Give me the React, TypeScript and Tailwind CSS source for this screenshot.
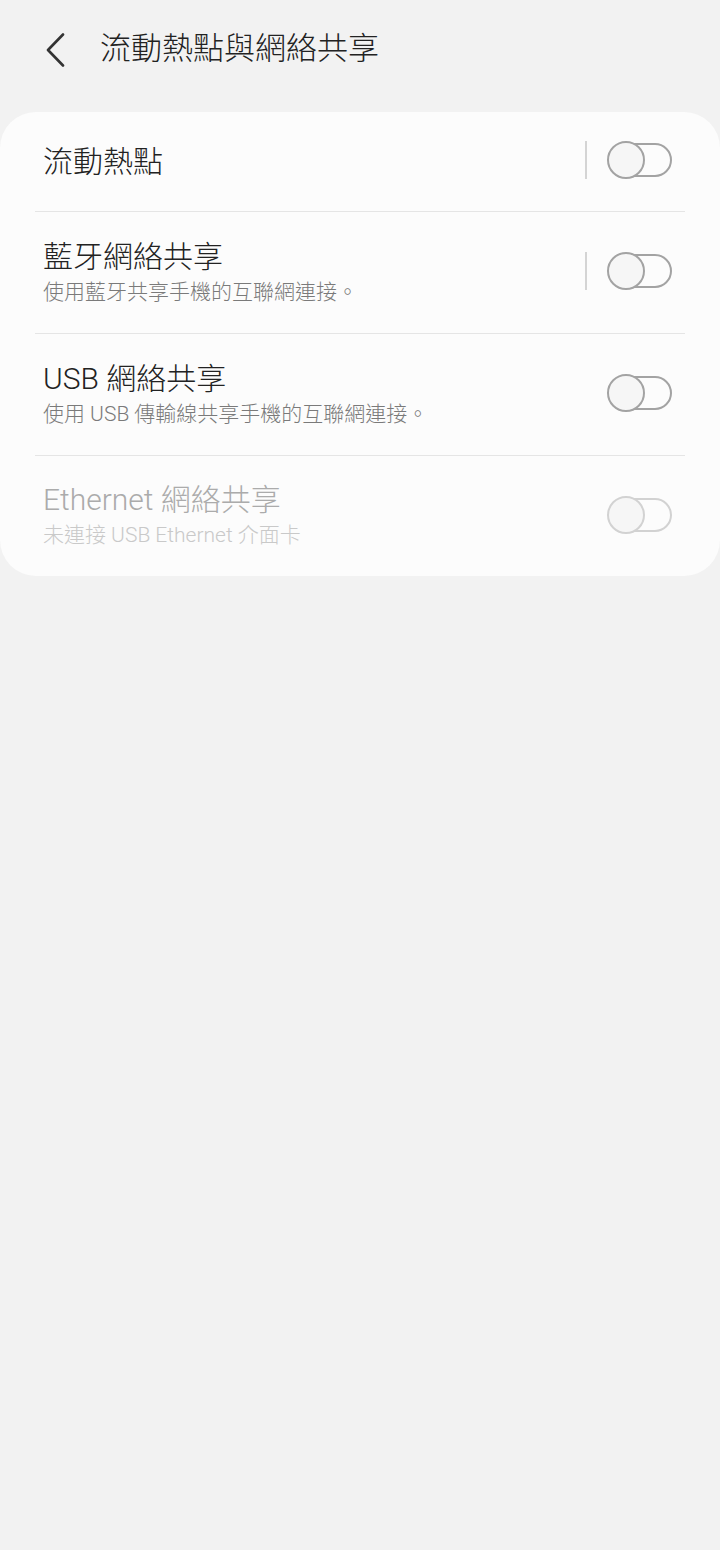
import { ReactNode } from 'react'

const font = { fontFamily: 'Roboto, "Noto Sans CJK TC", sans-serif' }

function Toggle({ disabled }: { disabled?: boolean }) {
  const stroke = disabled ? 'border-[#d2d2d2]' : 'border-[#a3a3a3]'
  return (
    <div className="relative w-[65px] h-[38px] -mt-[3px]">
      <div className={`absolute left-[8px] right-0 top-[2px] h-[34px] rounded-full border-2 ${stroke}`} />
      <div className={`absolute left-0 top-0 w-[38px] h-[38px] rounded-full border-2 bg-[#f6f6f6] ${stroke}`} />
    </div>
  )
}

interface RowProps {
  title: ReactNode
  subtitle?: ReactNode
  divider?: boolean
  disabled?: boolean
  separator?: boolean
  height: string
}

function Row({ title, subtitle, divider, disabled, separator, height }: RowProps) {
  return (
    <div className={`${divider ? 'border-t border-[#e5e5e5]' : ''}`}>
      <div className={`flex items-center pl-[8px] pr-[13px] ${height}`}>
        <div className="flex-1 font-light">
          <div className={`text-[30px] leading-[38px] ${disabled ? 'text-[#ababab]' : 'text-[#222222]'}`}>
            {title}
          </div>
          {subtitle && (
            <div className={`text-[21px] leading-[32px] ${disabled ? 'text-[#c9c9c9]' : 'text-[#7a7a7a]'}`}>
              {subtitle}
            </div>
          )}
        </div>
        {separator && <div className="w-[2px] h-[38px] bg-[#d4d4d4] mr-[20px] -mt-[3px]" />}
        <Toggle disabled={disabled} />
      </div>
    </div>
  )
}

export default function App() {
  return (
    <div className="min-h-[1550px] bg-[#f2f2f2]" style={font}>
      {/* Header */}
      <div className="h-[96px] flex items-center pl-[45px] pt-[3px]">
        <svg width="22" height="34" viewBox="0 0 22 34" className="mr-[33px]">
          <path d="M18 1.5 L3 17 L18 32.5" fill="none" stroke="#333333" strokeWidth="2.6" strokeLinecap="round" strokeLinejoin="round" />
        </svg>
        <h1 className="text-[31px] font-light text-[#222222]">流動熱點與網絡共享</h1>
      </div>

      {/* Settings card */}
      <div className="mt-[16px] bg-[#fcfcfc] rounded-[36px] px-[35px]">
        <Row title="流動熱點" separator height="h-[99px]" />
        <Row
          title="藍牙網絡共享"
          subtitle="使用藍牙共享手機的互聯網連接。"
          divider
          separator
          height="h-[121px]"
        />
        <Row
          title="USB 網絡共享"
          subtitle="使用 USB 傳輸線共享手機的互聯網連接。"
          divider
          height="h-[121px]"
        />
        <Row
          title="Ethernet 網絡共享"
          subtitle="未連接 USB Ethernet 介面卡"
          divider
          disabled
          height="h-[120px]"
        />
      </div>
    </div>
  )
}
